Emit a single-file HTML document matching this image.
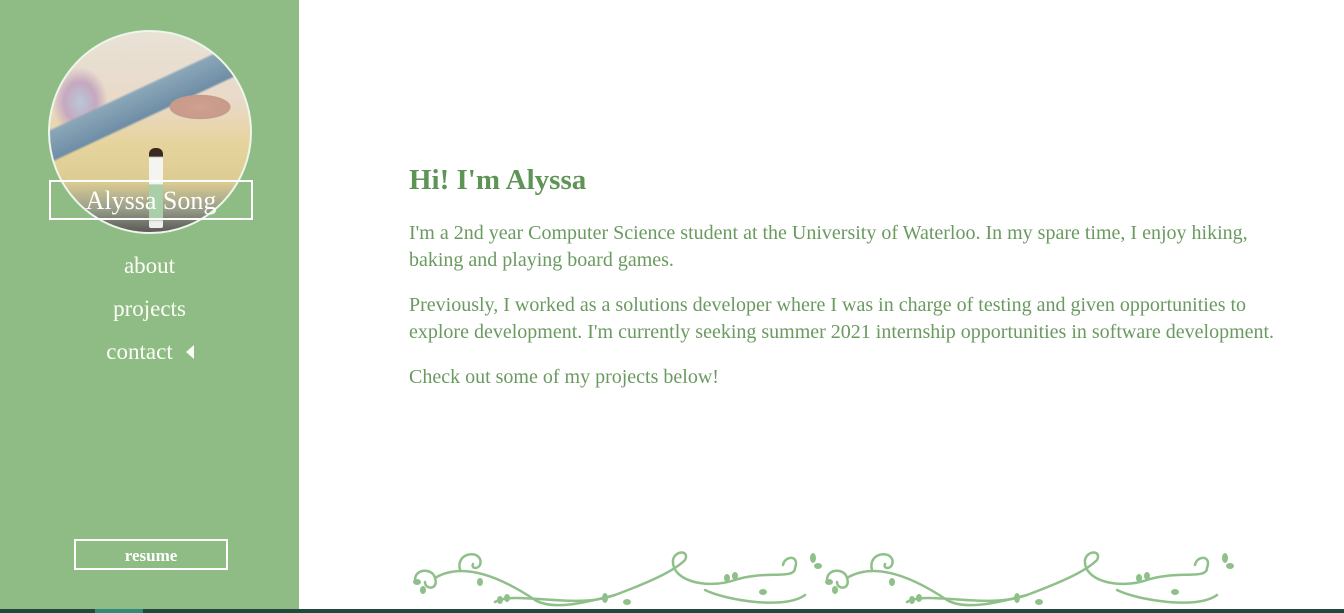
<!DOCTYPE html>
<html><head><style>
html,body{margin:0;padding:0;width:1344px;height:613px;overflow:hidden;background:#fff;font-family:Georgia,"Liberation Serif",serif;}
#side{position:absolute;left:0;top:0;width:299px;height:613px;background:#8fbc85;}
#circle{position:absolute;left:48px;top:30px;width:200px;height:200px;border-radius:50%;border:2px solid #eef5ea;overflow:hidden;
background:
radial-gradient(ellipse 50px 20px at 150px 75px,#d0a090 0,#c79a8a 60%,transparent 62%),
linear-gradient(155deg,transparent 33%,#8aa6b8 34%,#6f8ea6 44%,transparent 45%),
radial-gradient(ellipse 40px 50px at 30px 70px,#b9c8d8 0,#c6a8c0 40%,transparent 70%),
linear-gradient(180deg,#e8e2d6 0,#e9d9c8 35%,#e6d49e 55%,#dccc92 75%,#9aa08a 88%,#5a5a58 100%);}
#person{position:absolute;left:99px;top:116px;width:14px;height:80px;background:linear-gradient(#3a2a20 0,#3a2a20 10%,#f4f4f0 12%,#f4f4f0 45%,#a9cfa8 46%,#a9cfa8 90%,#eee 92%);border-radius:6px 6px 2px 2px;}
#name{position:absolute;left:49px;top:180px;width:200px;height:36px;border:2px solid #fff;color:#fff;font-size:26px;text-align:center;line-height:38px;}
.nav{position:absolute;left:0;width:299px;text-align:center;color:#fbfff6;font-size:23px;}
#resume{position:absolute;left:74px;top:539px;width:150px;height:27px;border:2px solid #fff;color:#fff;font-size:17px;font-weight:bold;text-align:center;line-height:29px;}
#main{position:absolute;left:409px;top:0;width:900px;color:#6a9a60;}
h1{position:absolute;top:164px;left:0;margin:0;font-size:29px;color:#5e9455;font-weight:bold;white-space:nowrap;}
p{position:absolute;left:0;margin:0;font-size:20px;line-height:27px;white-space:nowrap;}
#bar{position:absolute;left:0;top:609px;width:1344px;height:4px;background:#1e4a3d;}
#bar2{position:absolute;left:95px;top:609px;width:48px;height:4px;background:#2f8a78;}
</style></head><body>
<div id="side">
<div id="circle"><div id="person"></div></div>
<div id="name">Alyssa Song</div>
<div class="nav" style="top:253px">about</div>
<div class="nav" style="top:296px">projects</div>
<div class="nav" style="top:339px;left:-10px">contact</div>
<svg style="position:absolute;left:185px;top:345px" width="10" height="14"><polygon points="9,0 9,14 1,7" fill="#fbfff6"/></svg>
<div id="resume">resume</div>
</div>
<div id="main">
<h1>Hi! I'm Alyssa</h1>
<p style="top:220px">I'm a 2nd year Computer Science student at the University of Waterloo. In my spare time, I enjoy hiking,<br>baking and playing board games.</p>
<p style="top:292px">Previously, I worked as a solutions developer where I was in charge of testing and given opportunities to<br>explore development. I'm currently seeking summer 2021 internship opportunities in software development.</p>
<p style="top:364px">Check out some of my projects below!</p>
</div>
<svg style="position:absolute;left:405px;top:540px" width="840" height="72" fill="none" stroke="#8fc08a" stroke-width="2.5" stroke-linecap="round">
<g id="v">
<path d="M10,40 C10,28 28,28 30,38 C34,50 20,50 20,42 M30,38 C60,20 100,40 130,60 C150,72 190,60 210,55"/>
<path d="M55,30 C50,10 80,10 75,25 C72,30 66,28 68,24"/>
<path d="M90,62 C110,50 170,70 210,55 C250,40 270,30 280,20 C285,10 270,10 268,20 C266,40 300,50 330,40 C360,30 390,40 390,28 C395,15 380,15 378,25"/>
<path d="M300,50 C320,60 380,70 400,55"/>
<g fill="#8fc08a" stroke="none">
<ellipse cx="12" cy="42" rx="4" ry="3"/><ellipse cx="18" cy="50" rx="3" ry="4"/>
<ellipse cx="75" cy="42" rx="3" ry="4"/><ellipse cx="95" cy="60" rx="3" ry="4"/><ellipse cx="102" cy="58" rx="3" ry="4"/>
<ellipse cx="200" cy="58" rx="3" ry="5"/><ellipse cx="222" cy="62" rx="4" ry="3"/>
<ellipse cx="322" cy="38" rx="3" ry="4"/><ellipse cx="330" cy="36" rx="3" ry="4"/>
<ellipse cx="358" cy="52" rx="4" ry="3"/><ellipse cx="408" cy="18" rx="3" ry="5"/><ellipse cx="413" cy="26" rx="4" ry="3"/>
</g></g>
<use href="#v" x="412"/>
</svg>
<div id="bar"></div><div id="bar2"></div>
</body></html>
